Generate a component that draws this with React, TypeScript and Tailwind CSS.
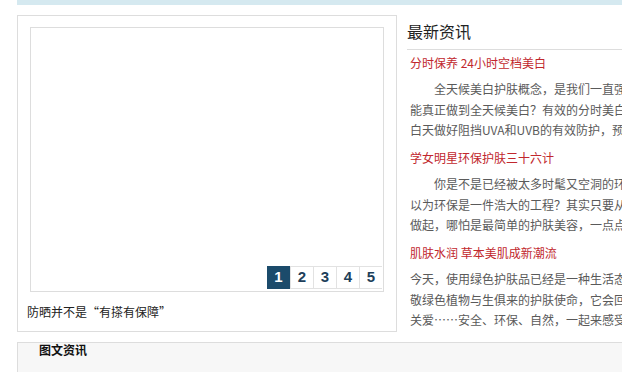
import React from "react";

const cjk = { fontFamily: '"SimSun", "Noto Sans CJK SC", sans-serif' };

const news = [
  {
    title: "分时保养 24小时空档美白",
    indent: true,
    lines: [
      "全天候美白护肤概念，是我们一直强调的，怎样才",
      "能真正做到全天候美白？有效的分时美白护理是关键，",
      "白天做好阻挡UVA和UVB的有效防护，预防黑色素……",
    ],
  },
  {
    title: "学女明星环保护肤三十六计",
    indent: true,
    lines: [
      "你是不是已经被太多时髦又空洞的环保口号弄晕了？",
      "以为环保是一件浩大的工程？其实只要从身边小事",
      "做起，哪怕是最简单的护肤美容，一点点改变……",
    ],
  },
  {
    title: "肌肤水润 草本美肌成新潮流",
    indent: false,
    lines: [
      "今天，使用绿色护肤品已经是一种生活态度，尊",
      "敬绿色植物与生俱来的护肤使命，它会回馈你的",
      "关爱……安全、环保、自然，一起来感受吧！",
    ],
  },
];

export default function App() {
  return (
    <div className="w-[622px] h-[372px] overflow-hidden bg-white" style={cjk}>
      <div className="ml-[17px] w-[700px]">
        <div className="h-[5px] bg-[#d5e9f0]" />
        <div className="mt-[10px] flex items-start h-[317px]">
          {/* left box */}
          <div className="w-[380px] h-[317px] border border-[#dddddd] pt-[11px] pl-[12px] shrink-0">
            <div className="relative w-[354px] h-[265px] border border-[#dddddd] bg-white">
              <div className="absolute right-[1px] bottom-[2px] flex" style={{ fontFamily: '"Liberation Sans", Arial, sans-serif' }}>
                {[1, 2, 3, 4, 5].map((n) => (
                  <div
                    key={n}
                    className={
                      n === 1
                        ? "w-[23px] h-[23px] flex items-center justify-center bg-[#1b4b6b] text-white text-[15px] font-bold"
                        : "w-[23px] h-[23px] flex items-center justify-center bg-white text-[#1d3f5a] text-[15px] font-bold border-l border-[#e2e2e2] border-t border-b"
                    }
                  >
                    {n}
                  </div>
                ))}
              </div>
            </div>
            <div className="mt-[11px] -ml-[3px] text-[12px] leading-[18px] text-[#222]">
              防晒并不是“有搽有保障”
            </div>
          </div>
          {/* right column */}
          <div className="ml-[10px] w-[300px] shrink-0">
            <div className="h-[35px] border-b border-[#dddddd] text-[16px] leading-[32px] text-[#222]">
              最新资讯
            </div>
            <div className="mt-[3px] pl-[3px] flex flex-col gap-[7.5px]">
              {news.map((item, i) => (
                <div key={i}>
                  <div className="text-[12px] leading-[20px] text-[#c1272d]">{item.title}</div>
                  <div className="mt-[6px] text-[12px] leading-[20.5px] text-[#5a5a5a]">
                    {item.lines.map((l, j) => (
                      <div
                        key={j}
                        className={j === 0 && item.indent ? "whitespace-nowrap pl-[24px]" : "whitespace-nowrap"}
                      >
                        {l}
                      </div>
                    ))}
                  </div>
                </div>
              ))}
            </div>
          </div>
        </div>
        <div className="mt-[10px] h-[40px] border-t border-l border-[#dddddd] bg-[#f7f7f7] pl-[21px]">
          <div className="text-[12px] leading-[14px] pt-[0px] font-bold text-[#111]">图文资讯</div>
        </div>
      </div>
    </div>
  );
}
